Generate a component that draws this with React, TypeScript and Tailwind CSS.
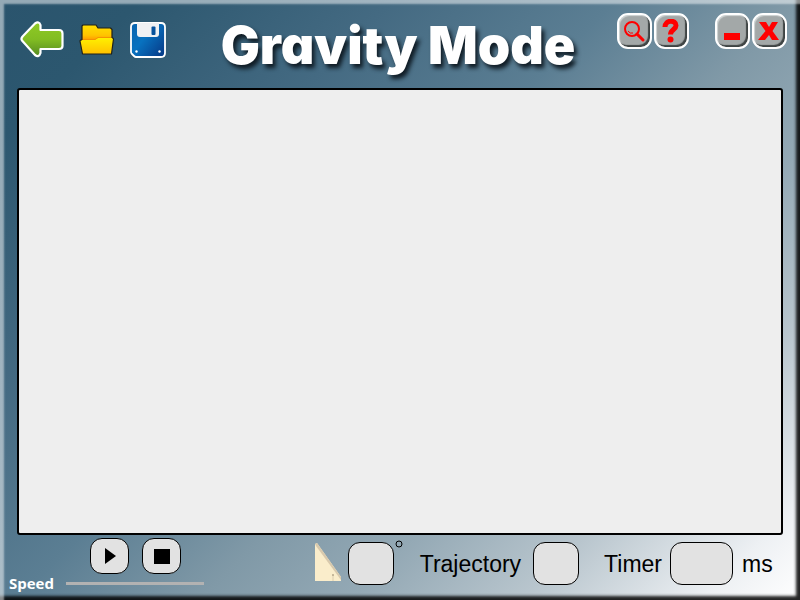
import React from "react";

const toolButton =
  "flex h-9 w-[35px] items-center justify-center rounded-[11px] border-2 border-white bg-[#a3a8a8] shadow-[inset_-2px_-2px_1px_#3f4444,inset_1px_1px_1px_#d3d8d8]";
const playerButton =
  "flex h-9 w-[39px] items-center justify-center rounded-xl border border-black bg-[#e2e2e2]";
const field =
  "h-[43px] rounded-xl border border-black bg-[#e2e2e2] text-center text-xl outline-none";

function BackIcon() {
  return (
    <svg width="46" height="40" viewBox="0 0 46 40" aria-hidden="true">
      <defs>
        <linearGradient id="green" x1="0" y1="0" x2="0" y2="1">
          <stop offset="0" stopColor="#8fca25" />
          <stop offset="0.5" stopColor="#82bd22" />
          <stop offset="1" stopColor="#568a22" />
        </linearGradient>
      </defs>
      <path
        d="M3 20.500Q1.500 18.500 4 16L16 3.500Q20 0.800 21.500 5V10H40Q43.500 10 43.500 13.500V26Q43.500 29 40 29H21.500V33Q20 38 16 35Z"
        fill="url(#green)"
        stroke="#fff"
        strokeWidth="2.200"
        strokeLinejoin="round"
      />
    </svg>
  );
}

function FolderIcon() {
  return (
    <svg width="36" height="34" viewBox="0 0 36 34" aria-hidden="true">
      <defs>
        <linearGradient id="folder" x1="0" y1="0" x2="0" y2="1">
          <stop offset="0" stopColor="#fff000" />
          <stop offset="1" stopColor="#ffc000" />
        </linearGradient>
        <linearGradient id="folderBack" x1="0" y1="0" x2="0" y2="1">
          <stop offset="0" stopColor="#ffe000" />
          <stop offset="0.600" stopColor="#ffc400" />
          <stop offset="1" stopColor="#ff8600" />
        </linearGradient>
      </defs>
      <path d="M3 19V3L4 2H17L19 5H31.500L33 6.500V19Z" fill="url(#folderBack)" stroke="#202018" strokeWidth="1.200" strokeLinejoin="round" />
      <path d="M1 18L2 17H16L19 15H34L34.500 16L32.500 31H3.500Z" fill="url(#folder)" />
      <path d="M3 17H1.500L1 18L3.500 31H32.500L34.500 16L34 15H33" fill="none" stroke="#202018" strokeWidth="1.200" strokeLinejoin="round" />
      <path d="M4 16.500H16L19 14.500H32" fill="none" stroke="#f28c00" strokeWidth="0.800" />
    </svg>
  );
}

function SaveIcon() {
  return (
    <svg width="36" height="36" viewBox="0 0 36 36" aria-hidden="true">
      <defs>
        <linearGradient id="disk" x1="0" y1="0" x2="1" y2="0.800">
          <stop offset="0" stopColor="#0862ae" />
          <stop offset="0.450" stopColor="#0872c0" />
          <stop offset="1" stopColor="#073f8c" />
        </linearGradient>
      </defs>
      <path
        d="M5 1H31Q35 1 35 5V31Q35 35 31 35H6Q5 35 4 34L2 32Q1 31 1 30V5Q1 1 5 1Z"
        fill="url(#disk)"
        stroke="#fff"
        strokeWidth="1.800"
      />
      <path d="M7 1H29V12Q29 15 26 15H10Q7 15 7 12Z" fill="#f0f1f3" />
      <rect x="21.500" y="4.500" width="4" height="8.500" rx="1" fill="#07529c" />
      <circle cx="6.500" cy="29.500" r="1.200" fill="#fff" />
      <circle cx="29.500" cy="29.500" r="1.200" fill="#fff" />
    </svg>
  );
}

export default function App() {
  return (
    <div className="relative flex min-h-screen flex-col bg-[linear-gradient(135deg,#2a546d_0%,#2c576f_10%,#446a82_28%,#5b7e93_44%,#8099a7_57%,#94a9b5_68%,#b8c5cd_80%,#edf0f3_93%,#ffffff_100%)] px-[17px] font-['Liberation_Sans',Arial,sans-serif] text-black">
      <div className="pointer-events-none absolute inset-0 shadow-[inset_4px_4px_2px_rgba(255,255,255,0.5),inset_-4px_-4px_3px_rgba(0,0,0,0.85)]" />
      <header className="flex h-[88px] items-start justify-between">
        <nav className="flex w-[162px] items-center gap-[15px] pt-5 pl-[2px]" aria-label="File">
          <button type="button" aria-label="Back" className="shrink-0"><BackIcon /></button>
          <button type="button" aria-label="Open" className="-ml-px shrink-0"><FolderIcon /></button>
          <button type="button" aria-label="Save" className="shrink-0"><SaveIcon /></button>
        </nav>
        <h1 className="pt-5 font-['Inter',sans-serif] text-[52px] leading-[52px] font-black whitespace-nowrap text-white [font-feature-settings:'cv11'] [text-shadow:3px_4px_4px_#101c25]">
          Gravity Mode
        </h1>
        <div className="-mr-1 flex gap-[2px] pt-[13px]">
          <button type="button" aria-label="Zoom" className={toolButton}>
            <svg width="22" height="22" viewBox="0 0 22 22" fill="none" stroke="#f00" aria-hidden="true">
              <circle cx="9" cy="9" r="7" strokeWidth="2" />
              <path d="M5 11Q7 14 10 13" strokeWidth="1" />
              <path d="M14 14L20 20" strokeWidth="3" strokeLinecap="round" />
            </svg>
          </button>
          <button type="button" aria-label="Help" className={toolButton}>
            <svg width="20" height="24" viewBox="0 0 20 24" aria-hidden="true">
              <path d="M4 8C4 0.500 15 0.500 15 6.500C15 10.500 9.500 10.500 9.500 15.500" fill="none" stroke="#f00" strokeWidth="5" />
              <circle cx="9.500" cy="20.500" r="3" fill="#f00" />
            </svg>
          </button>
          <button type="button" aria-label="Minimize" className={`${toolButton} ml-6`}>
            <svg width="20" height="22" viewBox="0 0 20 22" aria-hidden="true">
              <path d="M2 13H18V20H2Z" fill="#f00" />
            </svg>
          </button>
          <button type="button" aria-label="Close" className={toolButton}>
            <svg width="22" height="20" viewBox="0 0 22 20" aria-hidden="true">
              <path d="M1 1H8L11 6L14 1H20L14.500 10L21 19H14L11 14L7 19H0L7.500 10Z" fill="#f00" />
            </svg>
          </button>
        </div>
      </header>
      <main className="min-h-[447px] flex-1 rounded-[3px] border-2 border-black bg-[#eee]" />
      <footer className="flex h-[65px] justify-between">
        <div className="-ml-2 w-[195px] pt-[3px]">
          <div className="flex gap-[13px] pl-[81px]">
            <button type="button" aria-label="Play" className={playerButton}>
              <svg width="12" height="18" viewBox="0 0 12 18" aria-hidden="true"><path d="M1 1L12 9L1 17Z" /></svg>
            </button>
            <button type="button" aria-label="Stop" className={playerButton}>
              <svg width="16" height="15" viewBox="0 0 16 15" aria-hidden="true"><path d="M0 0H16V15H0Z" /></svg>
            </button>
          </div>
          <label className="flex items-center gap-3 font-['Open_Sans',sans-serif] text-[15px] leading-[19px] font-bold text-white">
            Speed
            <input type="range" className="h-[3px] min-w-0 flex-1 appearance-none bg-[#b2b2b2] [&::-webkit-slider-thumb]:appearance-none" />
          </label>
        </div>
        <div className="flex items-start pt-[7px] text-[23px] leading-[45px]">
          <svg width="28" height="40" viewBox="0 0 28 40" className="mr-[6px]" aria-hidden="true">
            <path d="M1 2L3 1L27 35V39H1Z" fill="#faedcb" />
            <path d="M1 2L3 1L27 35V38L2 4Z" fill="#d8c9ad" />
            <path d="M19 33V39" fill="none" stroke="#dccdae" />
            <circle cx="19" cy="33" r="1" fill="#b7a98c" />
          </svg>
          <input aria-label="Angle in degrees" className={`${field} w-[46px]`} />
          <svg width="8" height="8" viewBox="0 0 8 8" className="-mt-[2px] mr-[17px] ml-px" aria-hidden="true">
            <circle cx="4" cy="4" r="3" fill="none" stroke="#000" />
          </svg>
          <label htmlFor="trajectory" className="mr-3">Trajectory</label>
          <input id="trajectory" className={`${field} mr-[25px] w-[46px]`} />
          <label htmlFor="timer" className="mr-2">Timer</label>
          <input id="timer" className={`${field} mr-2 w-[63px]`} />
          <span className="-mr-[6px] w-12 pl-px">ms</span>
        </div>
      </footer>
    </div>
  );
}
